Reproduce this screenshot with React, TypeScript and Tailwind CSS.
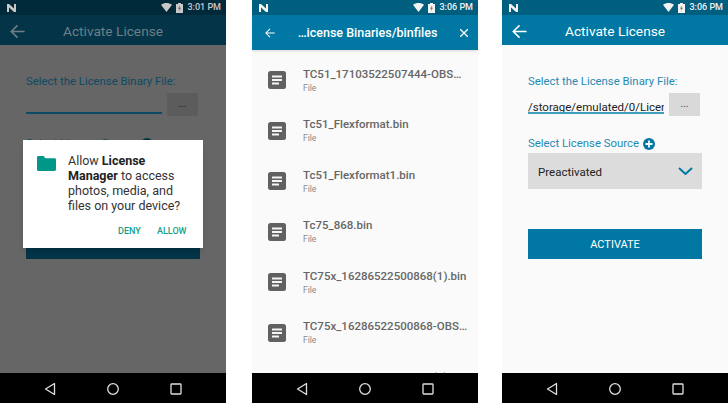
const font = "font-['Roboto','Liberation_Sans',sans-serif]";

function StatusIcons({ time, light }: { time: string; light: string }) {
  return (
    <div className="flex items-center h-full">
      <svg width="11" height="9" viewBox="0 0 11 9" className="mr-[4px]"><path d="M0 1.800C3.200-.6 7.800-.6 11 1.800L5.500 9Z" fill={light} /></svg>
      <svg width="7" height="10" viewBox="0 0 7 10" className="mr-[4px]"><path d="M2 0h3v1h2v9H0V1h2Z" fill={light} /><path d="M3.800 2.500 2 5.800h1.300L3 8l2-3.300H3.600Z" fill="#00000088" /></svg>
      <span className="text-[9px] leading-none font-medium" style={{ color: light }}>{time}</span>
    </div>
  );
}

function Status({ bg, time, light }: { bg: string; time: string; light: string }) {
  return (
    <div className={`h-[15px] shrink-0 flex items-center justify-between pl-[7px] pr-[5px] ${bg}`}>
      <svg width="9" height="8" viewBox="0 0 9 8"><path d="M0 0h2l5 4.500V0h2v8H7L2 3.500V8H0Z" fill={light} /></svg>
      <StatusIcons time={time} light={light} />
    </div>
  );
}

function NavBar() {
  return (
    <div className="h-[30px] shrink-0 bg-black flex items-center">
      <svg width="226" height="30" viewBox="0 0 226 30" fill="none" stroke="#e0e0e0" strokeWidth="1.300">
        <path d="M54.500 10.500v11L45.500 16Z" strokeLinejoin="round" />
        <circle cx="113" cy="16" r="5.300" />
        <rect x="171" y="11" width="10" height="10" rx="0.800" />
      </svg>
    </div>
  );
}

function Arrow({ color, size = 15 }: { color: string; size?: number }) {
  return (
    <svg width={size} height={size} viewBox="0 0 17 17" fill="none" stroke={color} strokeWidth="1.800">
      <path d="M16.500 8.500H1.500M8.500 1.500l-7 7 7 7" />
    </svg>
  );
}

function ActivateContent({ dim }: { dim?: boolean }) {
  const label = dim ? "text-[#0d4a63]" : "text-[#1f8ab3]";
  return (
    <div className="flex-1 pl-[26px] pr-[26px] pt-[29px]">
      <div className={`text-[11.35px] leading-[15px] ${label}`}>Select the License Binary File:</div>
      <div className="flex items-start mt-[4px] gap-[5px]">
        <div className={`w-[136px] h-[21px] border-b-2 overflow-hidden whitespace-nowrap text-[11.5px] leading-[14px] pt-[7px] ${dim ? "border-[#0d4a63]" : "border-[#3f9cbd] text-[#222]"}`}>
          {dim ? "" : "/storage/emulated/0/License"}
        </div>
        <div className={`w-[31px] h-[23px] flex items-center justify-center text-[10px] rounded-[1px] pb-[2px] ${dim ? "bg-[#5c5c5c] text-[#222]" : "bg-[#d9d9d9] text-[#444]"}`}>...</div>
      </div>
      <div className="flex items-center mt-[20px] h-[15px]">
        <span className={`text-[11.35px] leading-[15px] ${label}`}>Select License Source</span>
        <svg width="12" height="12" viewBox="0 0 12 12" className="ml-[4px]">
          <circle cx="6" cy="6" r="6" fill={dim ? "#033448" : "#0078a3"} />
          <path d="M6 2.500v7M2.500 6h7" stroke={dim ? "#666" : "#fff"} strokeWidth="1.800" />
        </svg>
      </div>
      <div className={`h-[36px] mt-[2px] flex items-center justify-between pl-[10px] pr-[9px] ${dim ? "bg-[#585858]" : "bg-[#dcdcdc]"}`}>
        <span className={`text-[11.5px] pt-[3px] ${dim ? "text-[#111]" : "text-[#222]"}`}>Preactivated</span>
        <svg width="15" height="8" viewBox="0 0 15 8" fill="none" stroke={dim ? "#033448" : "#0078a3"} strokeWidth="2"><path d="M1 1l6.500 6L14 1" /></svg>
      </div>
      <div className={`h-[30px] mt-[40px] flex items-center justify-center text-[11px] pt-[3px] ${dim ? "bg-[#033448] text-[#777]" : "bg-[#0078a3] text-white"}`}>ACTIVATE</div>
    </div>
  );
}

function Activate({ dim, time }: { dim?: boolean; time: string }) {
  return (
    <div className={`w-[226px] h-full shrink-0 flex flex-col relative ${dim ? "bg-[#666666]" : "bg-[#fafafa]"}`}>
      <Status bg={dim ? "bg-[#00293a]" : "bg-[#005e7f]"} time={time} light={dim ? "#c8c8c8" : "#f2f2f2"} />
      <div className={`h-[30px] shrink-0 flex items-center pt-[2px] ${dim ? "bg-[#033448]" : "bg-[#0078a3]"}`}>
        <div className="pl-[10px] w-[53px] flex"><Arrow color={dim ? "#6f7f86" : "#ffffff"} /></div>
        <span className={`ml-[10px] text-[13.7px] ${dim ? "text-[#6f7f86]" : "text-white"}`}>Activate License</span>
      </div>
      <ActivateContent dim={dim} />
      <NavBar />
      {dim && (
        <div className="absolute left-[23px] top-[140px] w-[180px] h-[108px] bg-white shadow-md">
          <svg width="19" height="15" viewBox="0 0 19 16" preserveAspectRatio="none" className="absolute left-[14px] top-[16px]">
            <path d="M0 1.500C0 .7.700 0 1.500 0h5l2 2.500h9c.8 0 1.500.7 1.500 1.500v10.500c0 .8-.7 1.500-1.500 1.500h-16C.7 16 0 15.300 0 14.500Z" fill="#009688" />
          </svg>
          <p className="absolute left-[45px] top-[13px] w-[130px] text-[12.5px] leading-[15px] text-[#333]">
            Allow <b className="font-bold text-[#222]">License Manager</b> to access photos, media, and files on your device?
          </p>
          <span className="absolute left-[95px] top-[85px] text-[9px] leading-[12px] font-medium text-[#16a089]">DENY</span>
          <span className="absolute left-[134px] top-[85px] text-[9px] leading-[12px] font-medium text-[#16a089]">ALLOW</span>
        </div>
      )}
    </div>
  );
}

function FileRow({ name }: { name: string }) {
  return (
    <div className="h-[50.5px] shrink-0 flex pl-[16px]">
      <svg width="18" height="18" viewBox="0 0 18 18" className="mt-[12px] shrink-0">
        <rect width="18" height="18" rx="2.500" fill="#616161" />
        <path d="M4 5.500h10M4 9h10M4 12.500h7" stroke="#f5f5f5" strokeWidth="1.800" />
      </svg>
      <div className="ml-[17px] pt-[7.5px] min-w-0 w-[165px]">
        <div className="text-[11.5px] leading-[14px] font-medium text-[#666] whitespace-nowrap overflow-hidden text-ellipsis">{name}</div>
        <div className="text-[8.5px] leading-[12px] mt-[1px] text-[#8a8a8a]">File</div>
      </div>
    </div>
  );
}

function Picker() {
  const names = [
    "TC51_17103522507444-OBSOLETE.bin",
    "Tc51_Flexformat.bin",
    "Tc51_Flexformat1.bin",
    "Tc75_868.bin",
    "TC75x_16286522500868(1).bin",
    "TC75x_16286522500868-OBSOLETE.bin",
    "TC75x_16286522500868(2).bin",
  ];
  return (
    <div className="w-[226px] h-full shrink-0 flex flex-col bg-[#fafafa]">
      <Status bg="bg-[#005e7f]" time="3:06 PM" light="#f2f2f2" />
      <div className="h-[35px] shrink-0 flex items-center justify-between bg-[#0078a3] pl-[13px] pr-[10px] pt-[1px] shadow-sm relative z-10">
        <Arrow color="#ffffff" size={10} />
        <span className="text-[12.5px] font-medium text-white">…icense Binaries/binfiles</span>
        <svg width="8" height="8" viewBox="0 0 8 8" stroke="#fff" strokeWidth="1.300"><path d="M0 0l8 8M8 0L0 8" /></svg>
      </div>
      <div className="flex-1 overflow-hidden pt-[9px] min-h-0 flex flex-col">
        {names.map((n) => <FileRow key={n} name={n} />)}
      </div>
      <NavBar />
    </div>
  );
}

export default function App() {
  return (
    <div className={`w-[728px] h-[403px] bg-white flex overflow-hidden ${font}`}>
      <Activate dim time="3:01 PM" />
      <div className="w-[26px] shrink-0" />
      <Picker />
      <div className="w-[24px] shrink-0" />
      <Activate time="3:06 PM" />
    </div>
  );
}
